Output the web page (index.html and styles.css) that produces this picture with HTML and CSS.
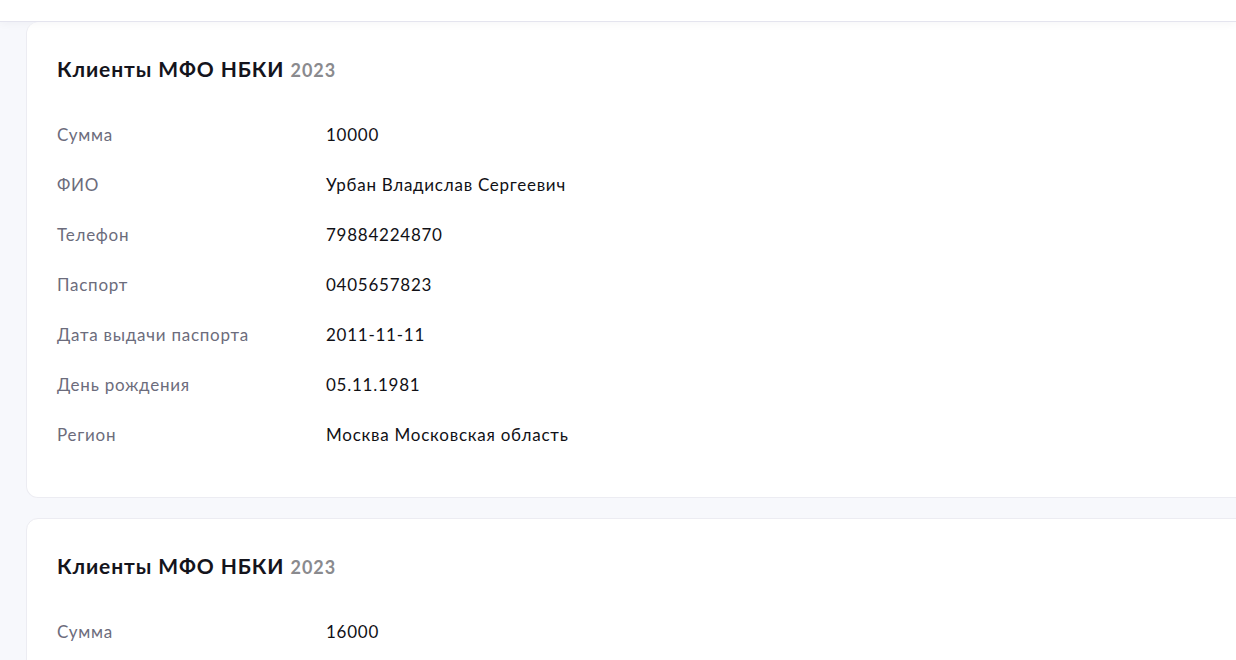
FILE: index.html
```html
<!DOCTYPE html>
<html lang="ru">
<head>
    <meta charset="UTF-8">
    <title>Клиенты МФО НБКИ</title>
    <link rel="stylesheet" href="styles.css">
</head>
<body>
    <div class="topbar"></div>

    <main class="content">
        <section class="card">
            <h2 class="card-title">Клиенты МФО НБКИ <span class="year">2023</span></h2>
            <div class="rows">
                <div class="row"><span class="label">Сумма</span><span class="value">10000</span></div>
                <div class="row"><span class="label">ФИО</span><span class="value">Урбан Владислав Сергеевич</span></div>
                <div class="row"><span class="label">Телефон</span><span class="value">79884224870</span></div>
                <div class="row"><span class="label">Паспорт</span><span class="value">0405657823</span></div>
                <div class="row"><span class="label">Дата выдачи паспорта</span><span class="value">2011-11-11</span></div>
                <div class="row"><span class="label">День рождения</span><span class="value">05.11.1981</span></div>
                <div class="row"><span class="label">Регион</span><span class="value">Москва Московская область</span></div>
            </div>
        </section>

        <section class="card">
            <h2 class="card-title">Клиенты МФО НБКИ <span class="year">2023</span></h2>
            <div class="rows">
                <div class="row"><span class="label">Сумма</span><span class="value">16000</span></div>
            </div>
        </section>
    </main>
</body>
</html>
```

FILE: styles.css
```css
html, body {
    margin: 0;
    padding: 0;
    height: 100%;
    overflow: hidden;
}

body {
    font-family: Lato, "Open Sans", sans-serif;
    background-color: #f7f8fc;
    color: #14141c;
}

.topbar {
    height: 21px;
    background-color: #ffffff;
    border-bottom: 1px solid #e4e4ee;
    box-shadow: 0 2px 8px rgba(20, 20, 60, 0.04);
    position: relative;
}

.content {
    padding-left: 26px;
    display: flex;
    flex-direction: column;
    gap: 20px;
}

.card {
    width: 1300px;
    background-color: #ffffff;
    border: 1px solid #ececf2;
    border-radius: 12px;
    padding: 33px 30px 38px;
    box-sizing: border-box;
}

.content .card:first-child {
    border-top: none;
}

.card-title {
    margin: 0 0 25px;
    font-size: 21px;
    line-height: 28px;
    font-weight: 700;
    letter-spacing: 0.9px;
    color: #14141c;
}

.year {
    font-size: 18px;
    font-weight: 700;
    letter-spacing: 1px;
    color: #8a8a8e;
}

.rows {
    display: flex;
    flex-direction: column;
}

.row {
    display: grid;
    grid-template-columns: 269px 1fr;
    height: 50px;
    align-items: center;
    font-size: 17px;
    letter-spacing: 0.75px;
}

.label {
    color: #6c6c7c;
}

.value {
    color: #111116;
}
```
